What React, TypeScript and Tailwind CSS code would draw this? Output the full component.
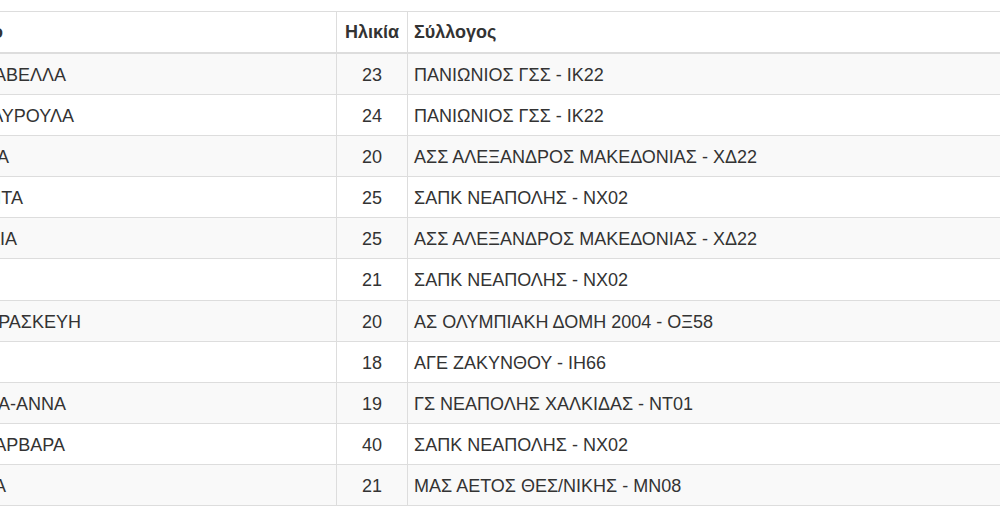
const athletes = [
  { name: "ΙΣΑΒΕΛΛΑ", end: 66, age: 23, club: "ΠΑΝΙΩΝΙΟΣ ΓΣΣ - ΙΚ22" },
  { name: "ΣΤΑΥΡΟΥΛΑ", end: 74, age: 24, club: "ΠΑΝΙΩΝΙΟΣ ΓΣΣ - ΙΚ22" },
  { name: "ΜΑΡΙΑ", end: 9, age: 20, club: "ΑΣΣ ΑΛΕΞΑΝΔΡΟΣ ΜΑΚΕΔΟΝΙΑΣ - ΧΔ22" },
  { name: "ΜΑΡΓΑΡΙΤΑ", end: 23, age: 25, club: "ΣΑΠΚ ΝΕΑΠΟΛΗΣ - ΝΧ02" },
  { name: "ΕΥΑΓΓΕΛΙΑ", end: 17, age: 25, club: "ΑΣΣ ΑΛΕΞΑΝΔΡΟΣ ΜΑΚΕΔΟΝΙΑΣ - ΧΔ22" },
  { name: "ΕΛΕΝΗ", end: -20, age: 21, club: "ΣΑΠΚ ΝΕΑΠΟΛΗΣ - ΝΧ02" },
  { name: "ΠΑΡΑΣΚΕΥΗ", end: 81, age: 20, club: "ΑΣ ΟΛΥΜΠΙΑΚΗ ΔΟΜΗ 2004 - ΟΞ58" },
  { name: "ΧΡΥΣΑ", end: -20, age: 18, club: "ΑΓΕ ΖΑΚΥΝΘΟΥ - ΙΗ66" },
  { name: "ΜΑΡΙΑ-ΑΝΝΑ", end: 66, age: 19, club: "ΓΣ ΝΕΑΠΟΛΗΣ ΧΑΛΚΙΔΑΣ - ΝΤ01" },
  { name: "ΒΑΡΒΑΡΑ", end: 65, age: 40, club: "ΣΑΠΚ ΝΕΑΠΟΛΗΣ - ΝΧ02" },
  { name: "ΑΝΝΑ", end: 6, age: 21, club: "ΜΑΣ ΑΕΤΟΣ ΘΕΣ/ΝΙΚΗΣ - ΜΝ08" },
];

// the table is scrolled so its first column starts 100px off-screen
const OFFSET = 100;

function NameTail({ text, end }: { text: string; end: number }) {
  return (
    <div className="flex justify-end whitespace-nowrap" style={{ width: end + OFFSET - 8 }}>
      {text}
    </div>
  );
}

export default function App() {
  return (
    <div
      className="h-[520px] w-[1000px] overflow-hidden bg-white pt-[11px] text-[18px] leading-6 text-[#333]"
      style={{ fontFamily: '"Liberation Sans", Arial, sans-serif' }}
    >
      <table className="ml-[-100px] w-[1260px] table-fixed border-separate border-spacing-0">
        <colgroup>
          <col className="w-[437px]" />
          <col className="w-[71px]" />
          <col />
        </colgroup>
        <thead>
          <tr className="font-bold">
            <th className="border-t border-r border-b-2 border-[#ddd] px-2 py-2 text-left">
              <NameTail text="Ονοματεπώνυμο" end={3} />
            </th>
            <th className="border-t border-r border-b-2 border-[#ddd] px-2 py-2 text-center">Ηλικία</th>
            <th className="border-t border-b-2 border-[#ddd] pr-2 pl-[6px] py-2 text-left">Σύλλογος</th>
          </tr>
        </thead>
        <tbody className="leading-[24.1px]">
          {athletes.map((a, i) => {
            const last = i === athletes.length - 1;
            return (
              <tr key={i} className={i % 2 === 0 ? "bg-[#f9f9f9]" : "bg-white"}>
                <td className={`border-r border-[#ddd] px-2 pt-[9px] pb-[7px] ${i > 0 ? "border-t" : ""} ${last ? "border-b" : ""}`}>
                  <NameTail text={a.name} end={a.end} />
                </td>
                <td
                  className={`border-r border-[#ddd] px-2 pt-[9px] pb-[7px] text-center ${i > 0 ? "border-t" : ""} ${
                    last ? "border-b" : ""
                  }`}
                >
                  {a.age}
                </td>
                <td
                  className={`border-[#ddd] pr-2 pl-[6px] pt-[9px] pb-[7px] whitespace-nowrap ${i > 0 ? "border-t" : ""} ${
                    last ? "border-b" : ""
                  }`}
                >
                  {a.club}
                </td>
              </tr>
            );
          })}
        </tbody>
      </table>
    </div>
  );
}
